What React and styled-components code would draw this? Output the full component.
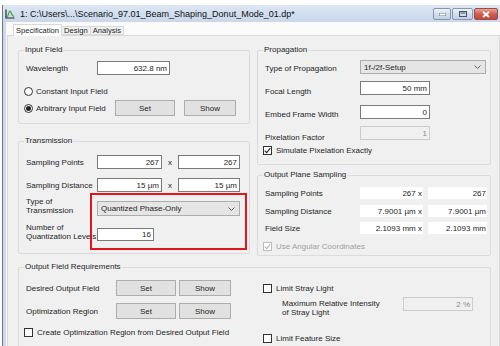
import React from 'react'
import styled, { createGlobalStyle } from 'styled-components'

const GlobalStyle = createGlobalStyle`
  html, body { margin: 0; padding: 0; background: #fff; }
  body {
    font-family: "Liberation Sans", Arial, sans-serif;
    font-size: 8px;
    color: #1e1e1e;
  }
`

const Screen = styled.div`
  width: 500px;
  height: 346px;
  overflow: hidden;
  box-sizing: border-box;
  padding: 5px 0 0 2px;
  background: #fff;
`

const Window = styled.div`
  height: 100%;
  display: flex;
  flex-direction: column;
  border-left: 1px solid #6b7a8c;
  background: #cddaea;
`

const TitleBar = styled.div`
  height: 17px;
  flex: none;
  display: flex;
  align-items: center;
  padding-left: 2px;
  background: linear-gradient(#dde7f4, #c8d7ea);
`

const Title = styled.span`
  margin-left: 5px;
  font-size: 9px;
  color: #111;
  white-space: nowrap;
  flex: 1;
`

const Controls = styled.div`
  display: flex;
  gap: 1px;
  align-self: flex-start;
  margin-top: 3px;
  margin-right: 2px;
`

const CtlButton = styled.div`
  width: ${p => p.$w}px;
  height: 12px;
  box-sizing: border-box;
  border: 1px solid ${p => (p.$close ? '#9b4b44' : '#8796ad')};
  border-radius: 2px;
  background: ${p => (p.$close
    ? 'linear-gradient(#e8a197, #cf5a4c 55%, #c24a3c)'
    : 'linear-gradient(#eef3f9, #d3deec 50%, #c3d1e4)')};
  display: flex;
  align-items: center;
  justify-content: center;
`

const Client = styled.div`
  flex: 1;
  display: flex;
  flex-direction: column;
  margin-left: 3px;
  padding: 2px 0 0 1px;
  background: #fbfbfb;
`

const TabStrip = styled.div`
  display: flex;
  align-items: flex-end;
  height: 11px;
  padding-left: 7px;
  position: relative;
  z-index: 1;
`

const Tab = styled.div`
  box-sizing: border-box;
  height: ${p => (p.$active ? 12 : 9)}px;
  margin-bottom: ${p => (p.$active ? -1 : 0)}px;
  margin-left: -1px;
  padding: 0 2px;
  display: flex;
  align-items: center;
  border: 1px solid #d9d9d9;
  border-bottom: ${p => (p.$active ? 'none' : '1px solid #d9d9d9')};
  background: ${p => (p.$active ? '#fff' : '#f0f0f0')};
  font-size: 7.6px;
  white-space: nowrap;
`

const TabPage = styled.div`
  flex: 1;
  border: 1px solid #d9d9d9;
  background: #f0f0f0;
  padding: 14px 0 0 10px;
`

const Columns = styled.div`
  display: grid;
  grid-template-columns: 232px 234px;
  column-gap: 7px;
  align-items: start;
`

const Stack = styled.div`
  display: flex;
  flex-direction: column;
  gap: ${p => p.$gap}px;
`

const Group = styled.div`
  position: relative;
  box-sizing: border-box;
  height: ${p => p.$h}px;
  width: ${p => (p.$w ? `${p.$w}px` : 'auto')};
  margin-top: ${p => p.$mt || 0}px;
  border: 1px solid #dcdcdc;
  border-radius: 2px;
  padding-left: 7px;
`

const Legend = styled.span`
  position: absolute;
  top: -6px;
  left: 5px;
  padding: 0 1px;
  line-height: 10px;
  background: #f0f0f0;
  white-space: nowrap;
`

const Row = styled.div`
  display: flex;
  align-items: center;
  height: ${p => p.$h}px;
  margin-top: ${p => p.$mt}px;
  margin-left: ${p => p.$ml || 0}px;
`

const Label = styled.span`
  flex: none;
  width: ${p => p.$w}px;
  line-height: 9px;
  white-space: nowrap;
  margin-top: ${p => p.$dt || 0}px;
  margin-bottom: ${p => p.$db || 0}px;
`

const TextBox = styled.div`
  flex: none;
  box-sizing: border-box;
  width: ${p => p.$w}px;
  height: ${p => p.$h || 14}px;
  border: 1px solid ${p => (p.$disabled ? '#cccccc' : '#7a7a7a')};
  background: ${p => (p.$disabled ? '#f0f0f0' : '#fff')};
  color: ${p => (p.$disabled ? '#8a8a8a' : 'inherit')};
  display: flex;
  align-items: center;
  justify-content: flex-end;
  padding-right: 2px;
  white-space: nowrap;
`

const ReadBox = styled.div`
  flex: none;
  box-sizing: border-box;
  width: ${p => p.$w}px;
  height: 12px;
  margin-left: ${p => p.$ml || 0}px;
  background: #fff;
  display: flex;
  align-items: center;
  justify-content: flex-end;
  padding-right: 1px;
  white-space: nowrap;
`

const Times = styled.span`
  flex: none;
  width: ${p => p.$w}px;
  text-align: center;
`

const Combo = styled.div`
  flex: none;
  box-sizing: border-box;
  width: ${p => p.$w}px;
  height: ${p => p.$h}px;
  border: 1px solid #adadad;
  background: #e5e5e5;
  display: flex;
  align-items: center;
  justify-content: space-between;
  padding: 0 4px 0 3px;
  white-space: nowrap;
`

const Button = styled.div`
  flex: none;
  box-sizing: border-box;
  width: ${p => p.$w}px;
  height: 16px;
  margin-left: ${p => p.$ml || 0}px;
  border: 1px solid #adadad;
  background: #e1e1e1;
  display: flex;
  align-items: center;
  justify-content: center;
`

const Check = styled.span`
  flex: none;
  box-sizing: border-box;
  width: 9px;
  height: 9px;
  margin-right: 4px;
  border: 1px solid ${p => (p.$disabled ? '#bcbcbc' : '#333')};
  background: #fff;
  display: flex;
  align-items: center;
  justify-content: center;
`

const Radio = styled.span`
  flex: none;
  box-sizing: border-box;
  width: 9px;
  height: 9px;
  margin-right: 3px;
  border-radius: 50%;
  border: 1px solid #333;
  background: #fff;
  display: flex;
  align-items: center;
  justify-content: center;
  &::after {
    content: '';
    display: ${p => (p.$on ? 'block' : 'none')};
    width: 5px;
    height: 5px;
    border-radius: 50%;
    background: #222;
  }
`

const OptionText = styled.span`
  flex: none;
  width: ${p => (p.$w ? `${p.$w}px` : 'auto')};
  white-space: nowrap;
  color: ${p => (p.$disabled ? '#a0a0a0' : 'inherit')};
`

const Annotation = styled.div`
  position: absolute;
  left: 71px;
  top: 51px;
  width: 157px;
  height: 57px;
  box-sizing: border-box;
  border: 2px solid #e3151a;
  pointer-events: none;
`

const SplitBody = styled.div`
  display: grid;
  grid-template-columns: 237px 1fr;
`

const Col = styled.div`
  display: flex;
  flex-direction: column;
`

const Chevron = () => (
  <svg width="7" height="4" viewBox="0 0 7 4">
    <polyline points="0.5,0.5 3.5,3.5 6.5,0.5" fill="none" stroke="#606060" strokeWidth="1" />
  </svg>
)

const Tick = ({ color = '#222' }) => (
  <svg width="7" height="7" viewBox="0 0 7 7">
    <polyline points="0.8,3.6 2.7,5.6 6.3,1.2" fill="none" stroke={color} strokeWidth="1.1" />
  </svg>
)

const AppIcon = () => (
  <svg width="10" height="10" viewBox="0 0 10 10">
    <polyline points="1,0.5 1,9 9.5,9" fill="none" stroke="#2b2b2b" strokeWidth="1.2" />
    <path d="M2 8 C3.5 7.5 3.8 2 5 2 C6.2 2 6.5 7 9 7.5" fill="none" stroke="#3aa33a" strokeWidth="1.2" />
  </svg>
)

const CheckItem = ({ checked, disabled, children }) => (
  <>
    <Check $disabled={disabled}>{checked && <Tick color={disabled ? '#b8b8b8' : '#222'} />}</Check>
    <OptionText $disabled={disabled}>{children}</OptionText>
  </>
)

export default function App() {
  return (
    <>
      <GlobalStyle />
      <Screen>
        <Window>
          <TitleBar>
            <AppIcon />
            <Title>1: C:\Users\...\Scenario_97.01_Beam_Shaping_Donut_Mode_01.dp*</Title>
            <Controls>
              <CtlButton $w={18}>
                <svg width="7" height="3" viewBox="0 0 7 3"><rect x="0" y="0" width="7" height="3" fill="#fff" stroke="#4a5466" strokeWidth="0.8" /></svg>
              </CtlButton>
              <CtlButton $w={21}>
                <svg width="8" height="6" viewBox="0 0 8 6"><rect x="0.5" y="0.5" width="7" height="5" fill="none" stroke="#4a5466" strokeWidth="1" /><rect x="1.5" y="1.5" width="5" height="1" fill="#4a5466" /></svg>
              </CtlButton>
              <CtlButton $w={24} $close>
                <svg width="8" height="7" viewBox="0 0 8 7"><path d="M1 1 L7 6 M7 1 L1 6" stroke="#fff" strokeWidth="1.8" /></svg>
              </CtlButton>
            </Controls>
          </TitleBar>

          <Client>
            <TabStrip>
              <Tab $active>Specification</Tab>
              <Tab>Design</Tab>
              <Tab>Analysis</Tab>
            </TabStrip>

            <TabPage>
              <Columns>
                <Stack $gap={17}>
                  <Group $h={74}>
                    <Legend>Input Field</Legend>
                    <Row $h={14} $mt={10}>
                      <Label $w={71}>Wavelength</Label>
                      <TextBox $w={73}>632.8 nm</TextBox>
                    </Row>
                    <Row $h={14} $mt={9} $ml={-2}>
                      <Radio />
                      <OptionText>Constant Input Field</OptionText>
                    </Row>
                    <Row $h={16} $mt={2} $ml={-2}>
                      <Radio $on />
                      <OptionText $w={79}>Arbitrary Input Field</OptionText>
                      <Button $w={60}>Set</Button>
                      <Button $w={52} $ml={9}>Show</Button>
                    </Row>
                  </Group>

                  <Group $h={113}>
                    <Legend>Transmission</Legend>
                    <Row $h={14} $mt={13}>
                      <Label $w={71}>Sampling Points</Label>
                      <TextBox $w={65}>267</TextBox>
                      <Times $w={16}>x</Times>
                      <TextBox $w={62}>267</TextBox>
                    </Row>
                    <Row $h={14} $mt={9}>
                      <Label $w={71}>Sampling Distance</Label>
                      <TextBox $w={65}>15 µm</TextBox>
                      <Times $w={16}>x</Times>
                      <TextBox $w={62}>15 µm</TextBox>
                    </Row>
                    <Row $h={19} $mt={7}>
                      <Label $w={71} $db={6}>Type of<br />Transmission</Label>
                      <Combo $w={143} $h={15}>
                        <span>Quantized Phase-Only</span>
                        <Chevron />
                      </Combo>
                    </Row>
                    <Row $h={21} $mt={6}>
                      <Label $w={71} $db={5}>Number of<br />Quantization Levels</Label>
                      <TextBox $w={57} $h={13}>16</TextBox>
                    </Row>
                    <Annotation />
                  </Group>
                </Stack>

                <Stack $gap={10}>
                  <Group $h={115}>
                    <Legend>Propagation</Legend>
                    <Row $h={14} $mt={9}>
                      <Label $w={95} $dt={2}>Type of Propagation</Label>
                      <Combo $w={126} $h={14}>
                        <span>1f-/2f-Setup</span>
                        <Chevron />
                      </Combo>
                    </Row>
                    <Row $h={14} $mt={7}>
                      <Label $w={95} $dt={7}>Focal Length</Label>
                      <TextBox $w={70}>50 mm</TextBox>
                    </Row>
                    <Row $h={14} $mt={10}>
                      <Label $w={95} $dt={5}>Embed Frame Width</Label>
                      <TextBox $w={70}>0</TextBox>
                    </Row>
                    <Row $h={14} $mt={7}>
                      <Label $w={95} $dt={8}>Pixelation Factor</Label>
                      <TextBox $w={70} $disabled>1</TextBox>
                    </Row>
                    <Row $h={12} $mt={4} $ml={-2}>
                      <CheckItem checked>Simulate Pixelation Exactly</CheckItem>
                    </Row>
                  </Group>

                  <Group $h={81}>
                    <Legend>Output Plane Sampling</Legend>
                    <Row $h={12} $mt={11}>
                      <Label $w={95}>Sampling Points</Label>
                      <ReadBox $w={63}>267&nbsp;x</ReadBox>
                      <ReadBox $w={59} $ml={5}>267</ReadBox>
                    </Row>
                    <Row $h={12} $mt={6}>
                      <Label $w={95}>Sampling Distance</Label>
                      <ReadBox $w={63}>7.9001 µm x</ReadBox>
                      <ReadBox $w={59} $ml={5}>7.9001 µm</ReadBox>
                    </Row>
                    <Row $h={12} $mt={5}>
                      <Label $w={95}>Field Size</Label>
                      <ReadBox $w={63}>2.1093 mm x</ReadBox>
                      <ReadBox $w={59} $ml={5}>2.1093 mm</ReadBox>
                    </Row>
                    <Row $h={12} $mt={6} $ml={-2}>
                      <CheckItem checked disabled>Use Angular Coordinates</CheckItem>
                    </Row>
                  </Group>
                </Stack>
              </Columns>

              <Group $h={95} $mt={11} $w={473}>
                <Legend>Output Field Requirements</Legend>
                <SplitBody>
                  <Col>
                    <Row $h={16} $mt={12}>
                      <Label $w={90}>Desired Output Field</Label>
                      <Button $w={60}>Set</Button>
                      <Button $w={52} $ml={3}>Show</Button>
                    </Row>
                    <Row $h={16} $mt={7}>
                      <Label $w={90}>Optimization Region</Label>
                      <Button $w={60}>Set</Button>
                      <Button $w={52} $ml={3}>Show</Button>
                    </Row>
                    <Row $h={12} $mt={7} $ml={-2}>
                      <CheckItem>Create Optimization Region from Desired Output Field</CheckItem>
                    </Row>
                  </Col>
                  <Col>
                    <Row $h={12} $mt={14}>
                      <CheckItem>Limit Stray Light</CheckItem>
                    </Row>
                    <Row $h={14} $mt={3} $ml={19}>
                      <Label $w={121} $dt={7}>Maximum Relative Intensity<br />of Stray Light</Label>
                      <TextBox $w={70} $disabled>2 %</TextBox>
                    </Row>
                    <Row $h={12} $mt={21}>
                      <CheckItem>Limit Feature Size</CheckItem>
                    </Row>
                  </Col>
                </SplitBody>
              </Group>
            </TabPage>
          </Client>
        </Window>
      </Screen>
    </>
  )
}
